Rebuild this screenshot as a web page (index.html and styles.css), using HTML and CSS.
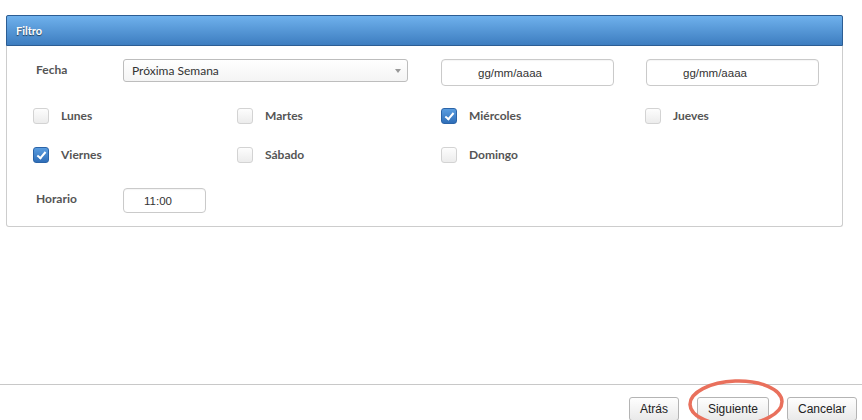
FILE: index.html
```html
<!DOCTYPE html>
<html lang="es">
<head>
    <meta charset="UTF-8">
    <meta name="viewport" content="width=device-width, initial-scale=1.0">
    <title>Filtro</title>
    <link rel="stylesheet" href="styles.css">
</head>
<body>
    <div class="panel">
        <div class="panel-heading">Filtro</div>
        <div class="panel-body">
            <div class="row">
                <label class="field-label">Fecha</label>
                <div class="select">Próxima Semana<span class="caret"></span></div>
                <input class="text-input date" type="text" value="gg/mm/aaaa">
                <input class="text-input date" type="text" value="gg/mm/aaaa">
            </div>

            <div class="days">
                <div class="day"><span class="check"></span>Lunes</div>
                <div class="day"><span class="check"></span>Martes</div>
                <div class="day"><span class="check checked"></span>Miércoles</div>
                <div class="day"><span class="check"></span>Jueves</div>
                <div class="day"><span class="check checked"></span>Viernes</div>
                <div class="day"><span class="check"></span>Sábado</div>
                <div class="day"><span class="check"></span>Domingo</div>
            </div>

            <div class="row">
                <label class="field-label">Horario</label>
                <input class="text-input time" type="text" value="11:00">
            </div>
        </div>
    </div>

    <div class="footer">
        <button class="btn">Atrás</button>
        <span class="highlight">
            <button class="btn">Siguiente</button>
            <svg class="circle" width="104" height="56" viewBox="0 0 104 56">
                <ellipse cx="52" cy="28" rx="46" ry="22" fill="none" stroke="#e9705c" stroke-width="3.5" transform="rotate(-2 52 28)"/>
            </svg>
        </span>
        <button class="btn">Cancelar</button>
    </div>
</body>
</html>
```

FILE: styles.css
```css
html {
    overflow: hidden;
}

body {
    margin: 0;
    height: 420px;
    display: flex;
    flex-direction: column;
    background: #fff;
    font-family: 'Lato', 'Open Sans', sans-serif;
    color: #555;
}

.panel {
    margin: 15px 0 0 6px;
    width: 837px;
    box-sizing: border-box;
    border: 1px solid #cdcdcd;
    border-top: none;
    border-radius: 2px 2px 3px 3px;
}

.panel-heading {
    height: 31px;
    box-sizing: border-box;
    margin: 0 -1px;
    padding-left: 9px;
    line-height: 30px;
    font-size: 11px;
    font-weight: bold;
    color: #fff;
    text-shadow: 0 1px 1px rgba(0, 0, 0, 0.6);
    background: linear-gradient(#6fb1ec, #3d7dc0);
    border: 1px solid #2c5d93;
    border-radius: 2px 2px 0 0;
}

.panel-body {
    padding: 13px 0 13px 26px;
}

.row {
    display: flex;
    align-items: flex-start;
}

.field-label {
    width: 87px;
    margin-left: 3px;
    line-height: 21px;
    font-size: 12px;
    font-weight: bold;
}

.select {
    position: relative;
    width: 285px;
    height: 23px;
    box-sizing: border-box;
    padding-left: 8px;
    line-height: 21px;
    font-size: 12px;
    color: #333;
    background: linear-gradient(#fff, #f4f4f4);
    border: 1px solid #bdbdbd;
    border-radius: 3px;
}

.caret {
    position: absolute;
    right: 6px;
    top: 9px;
    border-left: 3px solid transparent;
    border-right: 3px solid transparent;
    border-top: 4px solid #999;
}

.text-input {
    box-sizing: border-box;
    margin: 0;
    font-family: 'Liberation Sans', Arial, sans-serif;
    font-size: 11.5px;
    color: #333;
    background: #fff;
    border: 1px solid #cacaca;
    border-radius: 4px;
    box-shadow: inset 0 1px 1px rgba(0, 0, 0, 0.04);
    outline: none;
}

.date {
    width: 173px;
    height: 27px;
    margin-left: 33px;
    padding-left: 36px;
}

.date + .date {
    margin-left: 32px;
}

.time {
    width: 83px;
    height: 25px;
    padding-left: 20px;
}

.days {
    display: grid;
    grid-template-columns: repeat(4, 204px);
    row-gap: 23px;
    margin: 22px 0 25px;
}

.day {
    display: flex;
    align-items: center;
    height: 16px;
    line-height: 14px;
    font-size: 12px;
    font-weight: bold;
}

.check {
    width: 16px;
    height: 16px;
    box-sizing: border-box;
    margin-right: 12px;
    border: 1px solid #d3d3d3;
    border-radius: 3px;
    background: linear-gradient(#fdfdfd, #ececec);
}

.check.checked {
    position: relative;
    border-color: #2b64a8;
    background: linear-gradient(#5a9de0, #2f6eb8);
}

.check.checked::after {
    content: "";
    position: absolute;
    left: 5px;
    top: 2px;
    width: 3px;
    height: 7px;
    border: solid #fff;
    border-width: 0 2px 2px 0;
    transform: rotate(40deg);
}

.footer {
    margin-top: auto;
    height: 36px;
    box-sizing: border-box;
    padding: 12px 5px 0 0;
    border-top: 1px solid #c8c8c8;
    display: flex;
    justify-content: flex-end;
    gap: 18px;
    align-items: flex-start;
}

.btn {
    height: 24px;
    padding: 0 10px;
    font-family: 'Liberation Sans', Arial, sans-serif;
    font-size: 12px;
    color: #222;
    background: linear-gradient(#fefefe, #e9e9e9);
    border: 1px solid #b4b4b4;
    border-radius: 3px;
}

.highlight {
    position: relative;
    display: block;
}

.highlight .btn {
    display: block;
}

.circle {
    position: absolute;
    left: -13px;
    top: -22px;
    pointer-events: none;
}
```
